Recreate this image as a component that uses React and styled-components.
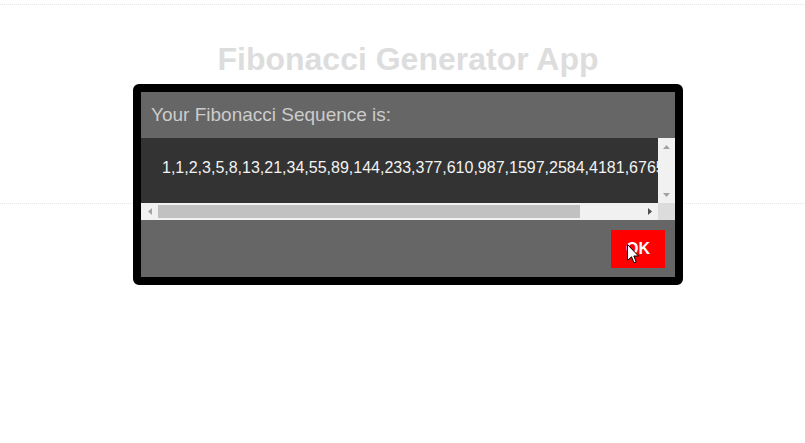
import React from "react";
import styled, { createGlobalStyle } from "styled-components";

const GlobalStyle = createGlobalStyle`
  html, body {
    margin: 0;
    padding: 0;
    background: #ffffff;
    font-family: "Liberation Sans", Arial, sans-serif;
  }
`;

const Page = styled.div`
  padding-top: 4px;
`;

const Section = styled.section`
  border-top: 1px dotted #e6e6e6;
  border-bottom: 1px dotted #e6e6e6;
  height: 198px;
  padding-left: 11px;
`;

const Title = styled.h1`
  margin: 36px 0 0;
  text-align: center;
  font-size: 32px;
  font-weight: bold;
  color: #dddddd;
`;

const Overlay = styled.div`
  position: fixed;
  inset: 0;
  display: flex;
  justify-content: center;
  align-items: flex-start;
  padding: 84px 0 0 11px;
`;

const Modal = styled.div`
  width: 534px;
  border: 8px solid #000;
  border-radius: 6px;
  background: #666666;
  display: flex;
  flex-direction: column;
`;

const Header = styled.div`
  height: 46px;
  display: flex;
  align-items: center;
  padding: 0 10px;
  font-size: 19px;
  color: #cccccc;
`;

const ScrollBox = styled.div`
  display: grid;
  grid-template-columns: 1fr 17px;
  grid-template-rows: 65px 17px;
`;

const Viewport = styled.div`
  overflow: hidden;
  background: #333333;
`;

const Sequence = styled.p`
  margin: 0;
  white-space: nowrap;
  padding: 21px 0 0 21px;
  font-size: 16px;
  line-height: 18px;
  color: #f2f2f2;
`;

const Track = styled.div`
  display: flex;
  flex-direction: ${(p) => (p.$vertical ? "column" : "row")};
  background: #f1f1f1;
`;

const ArrowButton = styled.div`
  flex: 0 0 17px;
  width: 17px;
  height: 17px;
  display: flex;
  align-items: center;
  justify-content: center;
`;

const Thumb = styled.div`
  flex: 0 0 auto;
  margin: 2px 0;
  background: #c1c1c1;
`;

const Spacer = styled.div`
  flex: 1 1 auto;
`;

const Corner = styled.div`
  background: #dcdcdc;
`;

const Footer = styled.div`
  height: 57px;
  box-sizing: border-box;
  padding: 10px 10px 9px;
  display: flex;
  justify-content: flex-end;
  align-items: flex-start;
`;

const OkButton = styled.button`
  position: relative;
  border: none;
  background: #ff0000;
  color: #ffffff;
  font-family: "Liberation Sans", Arial, sans-serif;
  font-size: 16px;
  font-weight: bold;
  line-height: 18px;
  padding: 10px 15px;
  cursor: pointer;
`;

const Cursor = styled.svg`
  position: absolute;
  left: 16px;
  top: 14px;
  width: 12px;
  height: 20px;
  pointer-events: none;
`;

const arrows = {
  left: { w: 4, h: 7, d: "M4 0L0 3.5L4 7z" },
  right: { w: 4, h: 7, d: "M0 0L4 3.5L0 7z" },
  up: { w: 7, h: 4, d: "M0 4L3.5 0L7 4z" },
  down: { w: 7, h: 4, d: "M0 0L3.5 4L7 0z" },
};

const Arrow = ({ dir, color }) => {
  const a = arrows[dir];
  return (
    <ArrowButton>
      <svg width={a.w} height={a.h} viewBox={`0 0 ${a.w} ${a.h}`}>
        <path d={a.d} fill={color} />
      </svg>
    </ArrowButton>
  );
};

const fib = (n) => {
  const out = [1, 1];
  while (out.length < n) out.push(out[out.length - 1] + out[out.length - 2]);
  return out;
};

export default function App() {
  return (
    <>
      <GlobalStyle />
      <Page>
        <Section>
          <Title>Fibonacci Generator App</Title>
        </Section>
      </Page>
      <Overlay>
        <Modal>
          <Header>Your Fibonacci Sequence is:</Header>
          <ScrollBox>
            <Viewport>
              <Sequence>{fib(20).join(",")}</Sequence>
            </Viewport>
            <Track $vertical>
              <Arrow dir="up" color="#a3a3a3" />
              <Spacer />
              <Arrow dir="down" color="#a3a3a3" />
            </Track>
            <Track>
              <Arrow dir="left" color="#a3a3a3" />
              <Thumb style={{ width: 422 }} />
              <Spacer />
              <Arrow dir="right" color="#505050" />
            </Track>
            <Corner />
          </ScrollBox>
          <Footer>
            <OkButton>
              OK
              <Cursor viewBox="0 0 12 20">
                <path
                  d="M0.5 0.5 L0.5 16.5 L4.5 12.8 L7 18.8 L9.2 17.8 L6.8 12 L11.5 12 Z"
                  fill="#ffffff"
                  stroke="#000000"
                  strokeWidth="1"
                />
              </Cursor>
            </OkButton>
          </Footer>
        </Modal>
      </Overlay>
    </>
  );
}
